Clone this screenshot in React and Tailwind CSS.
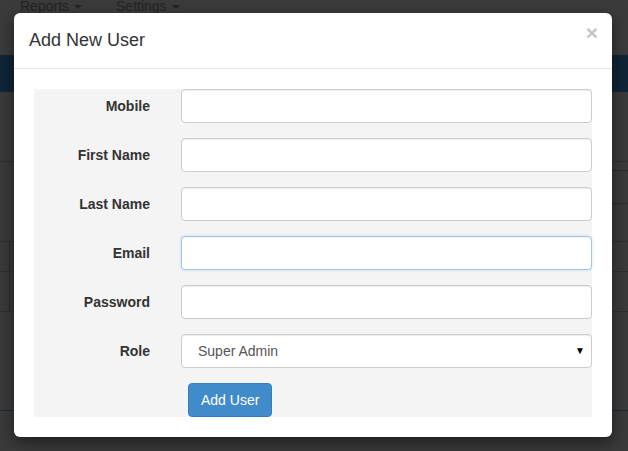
import { useState } from "react";

const fields = [
  { label: "Mobile", type: "text" },
  { label: "First Name", type: "text" },
  { label: "Last Name", type: "text" },
  { label: "Email", type: "email", focused: true },
  { label: "Password", type: "password" },
];

function Backdrop() {
  // Página de fondo atenuada por el overlay del modal
  return (
    <div className="flex h-[451px] w-[628px] flex-col overflow-hidden bg-[#3a3a3a]">
      <div className="flex h-[55px] items-start gap-x-[34px] bg-[#3b3b3b] pl-[20px] text-[14px] leading-none text-[#232323]">
        {["Reports", "Settings"].map((item) => (
          <span key={item} className="-mt-[1px] flex items-center">
            {item}
            <span className="ml-[5px] mt-[2px] h-0 w-0 border-x-[4px] border-t-[4px] border-x-transparent border-t-[#232323]" />
          </span>
        ))}
      </div>
      <div className="h-[37px] bg-[#0f2538]" />
      <div className="h-[70px] border-b border-[#2f2f2f]" />
      <div className="flex h-[80px] items-center justify-end border-b border-[#2f2f2f] pr-0">
        <div className="mt-[-30px] h-[34px] w-[20px] rounded-l border border-r-0 border-[#2c2c2c]" />
      </div>
      <div className="flex h-[30px] border-b border-[#2f2f2f]">
        <div className="w-[10px] border-r border-[#2c2c2c]" />
      </div>
      <div className="flex h-[40px] border-b border-[#2f2f2f]">
        <div className="w-[10px] border-r border-[#2c2c2c]" />
      </div>
      <div className="h-[99px] border-b border-[#1c2a36]" />
    </div>
  );
}

function AddUserModal() {
  const [role, setRole] = useState("Super Admin");

  return (
    <div className="absolute left-[14px] top-[13px] w-[598px] rounded-[6px] bg-white shadow-[0_5px_15px_rgba(0,0,0,0.5)]">
      {/* Cabecera */}
      <div className="flex items-start justify-between border-b border-[#e5e5e5] px-[15px] py-[15px]">
        <h4 className="text-[18px] leading-[25px] text-[#333]">Add New User</h4>
        <button className="-mr-[1px] mt-[-6px] text-[21px] font-bold leading-none text-[#c4c4c4]">
          ×
        </button>
      </div>

      {/* Cuerpo */}
      <div className="p-[20px]">
        <form className="flex flex-col gap-y-[15px] bg-[#f4f4f4]">
          {fields.map((f) => (
            <div key={f.label} className="flex h-[34px] items-center">
              <label className="w-[132px] pr-[16px] text-right text-[14px] font-bold text-[#333]">
                {f.label}
              </label>
              <input
                type={f.type}
                className={`ml-[15px] h-[34px] flex-1 rounded-[4px] border bg-white px-[12px] text-[14px] text-[#555] outline-none ${
                  f.focused
                    ? "border-[#a3c4e4] shadow-[inset_0_1px_1px_rgba(0,0,0,0.05),0_0_3px_rgba(102,175,233,0.35)]"
                    : "border-[#ccc] shadow-[inset_0_1px_1px_rgba(0,0,0,0.075)]"
                }`}
              />
            </div>
          ))}

          <div className="flex h-[34px] items-center">
            <label className="w-[132px] pr-[16px] text-right text-[14px] font-bold text-[#333]">
              Role
            </label>
            <div className="relative ml-[15px] flex-1">
              <select
                value={role}
                onChange={(e) => setRole(e.target.value)}
                className="h-[34px] w-full appearance-none rounded-[4px] border border-[#ccc] bg-white pl-[16px] text-[14px] text-[#555] shadow-[inset_0_1px_1px_rgba(0,0,0,0.075)] outline-none"
              >
                <option>Super Admin</option>
                <option>Admin</option>
                <option>User</option>
              </select>
              <span className="pointer-events-none absolute right-[7px] top-[9px] text-[10px] text-black">
                ▼
              </span>
            </div>
          </div>

          <div className="flex">
            <button
              type="button"
              className="ml-[154px] h-[34px] rounded-[4px] border border-[#357ebd] bg-[#428bca] px-[12px] text-[14px] text-white"
            >
              Add User
            </button>
          </div>
        </form>
      </div>
    </div>
  );
}

export default function App() {
  return (
    <div className="relative h-[451px] w-[628px] overflow-hidden font-['Liberation_Sans',Arial,sans-serif]">
      <Backdrop />
      <AddUserModal />
    </div>
  );
}
